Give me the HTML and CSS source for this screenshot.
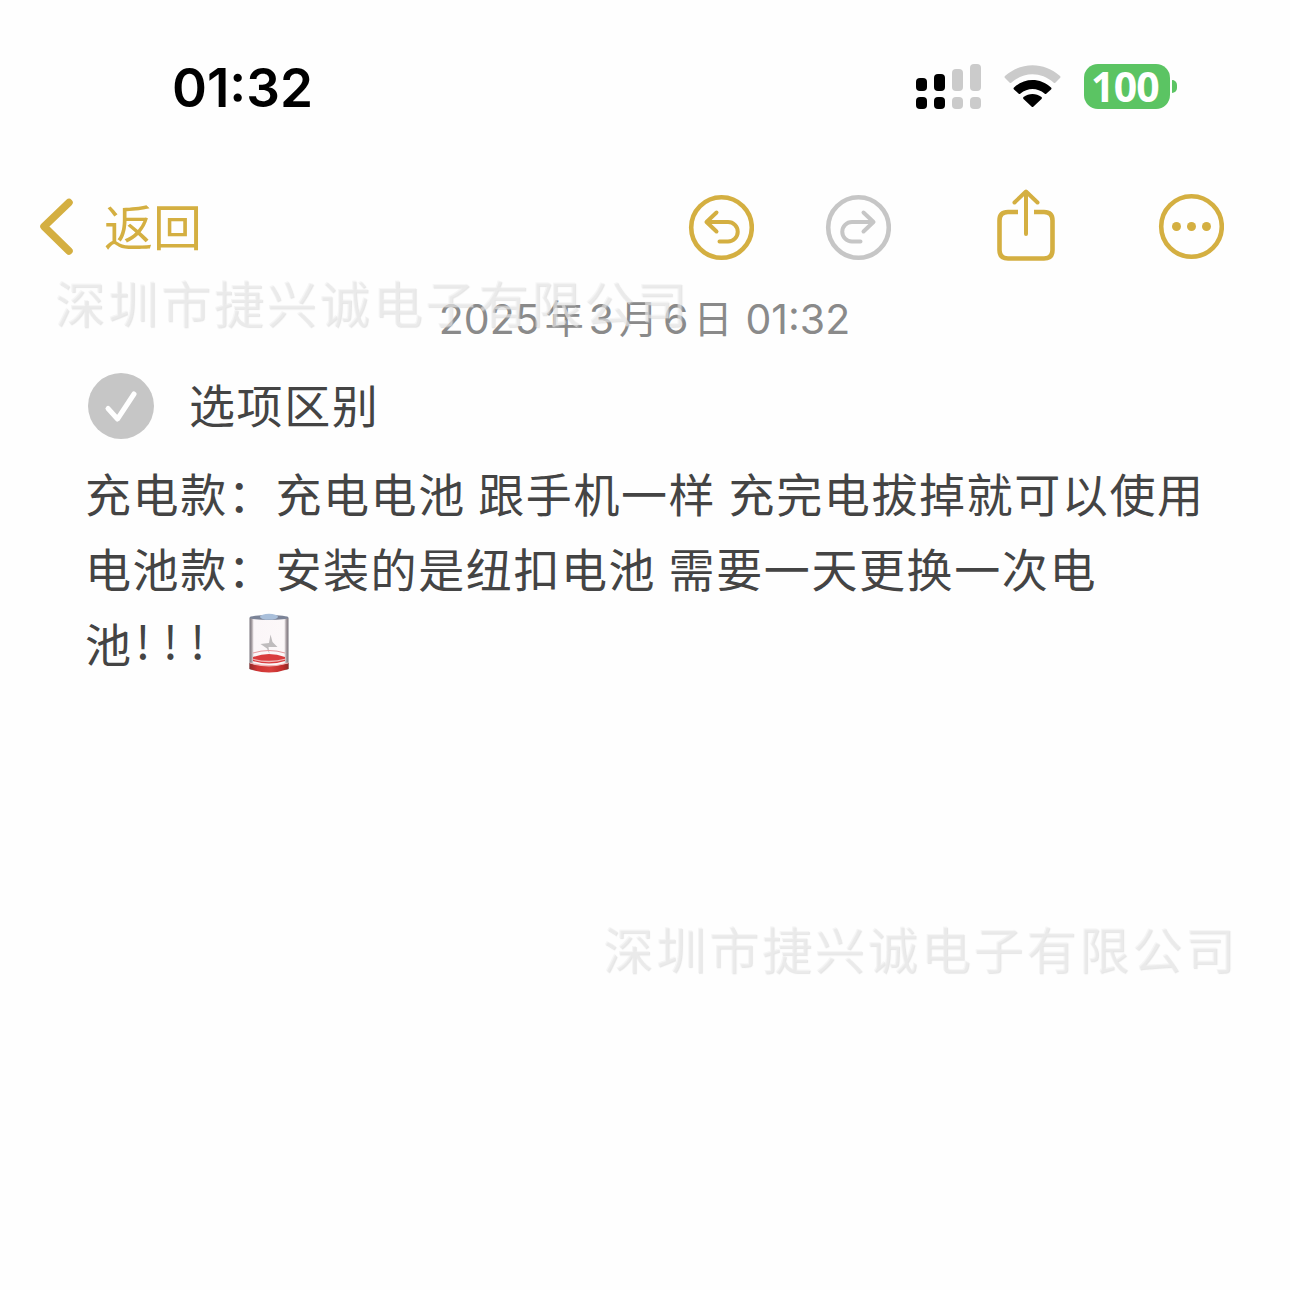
FILE: index.html
```html
<!DOCTYPE html>
<html lang="zh-CN">
<head>
    <meta charset="UTF-8">
    <meta name="viewport" content="width=device-width, initial-scale=1.0">
    <title>选项区别</title>
    <link rel="stylesheet" href="styles.css">
</head>
<body>
    <div class="status-bar">
        <div class="clock">01:32</div>
        <div class="status-icons">
            <svg class="signal" width="66" height="46" viewBox="0 0 66 46">
                <rect x="0" y="14" width="11" height="13" rx="4"/>
                <rect x="18" y="10" width="11" height="17" rx="4"/>
                <rect class="off" x="36" y="5" width="11" height="22" rx="4"/>
                <rect class="off" x="54" y="0" width="11" height="27" rx="4"/>
                <rect x="0" y="33" width="11" height="12" rx="4"/>
                <rect x="18" y="33" width="11" height="12" rx="4"/>
                <rect class="off" x="36" y="33" width="11" height="12" rx="4"/>
                <rect class="off" x="54" y="33" width="11" height="12" rx="4"/>
            </svg>
            <svg class="wifi" width="58" height="43" viewBox="0 0 58 43">
                <path class="off" d="M1 13 Q0 12 1 11 C17 -3.500 40 -3.500 56 11 Q57 12 56 13 L51.500 17.500 Q50.500 18.500 49.500 17.500 C37 6.500 20 6.500 7.500 17.500 Q6.500 18.500 5.500 17.500 Z"/>
                <path d="M10 24.500 Q9 23.500 10 22.500 C20.500 12.500 36.500 12.500 47 22.500 Q48 23.500 47 24.500 L42.500 28.500 Q41.500 29.500 40.500 28.500 C33.500 22.500 23.500 22.500 16.500 28.500 Q15.500 29.500 14.500 28.500 Z"/>
                <path d="M19.500 34 Q18.500 33 19.500 32 C25 28 32 28 37.500 32 Q38.500 33 37.500 34 L29.500 41.500 Q28.500 42.500 27.500 41.500 Z"/>
            </svg>
            <div class="battery">
                <span class="battery-level">100</span>
                <span class="battery-tip"></span>
            </div>
        </div>
    </div>

    <div class="toolbar">
        <div class="back">
            <svg width="36" height="60" viewBox="0 0 36 60">
                <path d="M31 5.500 L6 29.500 L31 54" stroke-width="7.500"/>
            </svg>
            <span>返回</span>
        </div>
        <div class="actions">
            <svg width="66" height="76" viewBox="0 0 66 76">
                <circle cx="33.500" cy="38.500" r="30.300" stroke-width="4.600"/>
                <path d="M28.500 23.500 L18.500 33 L28.500 42.500 M19 33 H40 A9.700 9.700 0 0 1 40 52.500 H31.500" stroke-width="4"/>
            </svg>
            <svg class="disabled" width="66" height="76" viewBox="0 0 66 76">
                <circle cx="33.500" cy="38.500" r="30.300" stroke-width="4.600"/>
                <path d="M38.500 23.500 L48.500 33 L38.500 42.500 M48 33 H27 A9.700 9.700 0 0 0 27 52.500 H35.500" stroke-width="4"/>
            </svg>
            <svg class="share" width="60" height="76" viewBox="0 0 60 76">
                <path d="M22 23 H12 Q3.500 23 3.500 31.500 V61 Q3.500 69.500 12 69.500 H48 Q56.500 69.500 56.500 61 V31.500 Q56.500 23 48 23 H38" stroke-width="4.600" stroke-linecap="butt"/>
                <path d="M30 45 V3 M18.500 13.500 L30 2.500 L41.500 13.500" stroke-width="4"/>
            </svg>
            <svg class="more" width="66" height="76" viewBox="0 0 66 76">
                <circle cx="33.500" cy="37.500" r="30.300" stroke-width="4.600"/>
                <g class="dots">
                    <circle cx="18.500" cy="37.500" r="4.500"/>
                    <circle cx="33.500" cy="37.500" r="4.500"/>
                    <circle cx="48.500" cy="37.500" r="4.500"/>
                </g>
            </svg>
        </div>
    </div>

    <div class="date"><span class="year">2025</span><b>年</b><span>3</span><b>月</b><span>6</span><b>日</b><span class="hour">01:32</span></div>

    <div class="note">
        <div class="check-item">
            <svg width="66" height="66" viewBox="0 0 66 66">
                <circle cx="33" cy="33" r="33"/>
                <path d="M20 35.500 L29.500 46 L46 21"/>
            </svg>
            <span>选项区别</span>
        </div>
        <p>充电款：充电电池 跟手机一样 充完电拔掉就可以使用</p>
        <p>电池款：安装的是纽扣电池 需要一天更换一次电</p>
        <p class="last">池<span class="marks">!!!</span>
            <svg class="low-battery" width="42" height="62" viewBox="0 0 42 62">
                <defs>
                    <linearGradient id="red" x1="0" x2="1" y1="0" y2="0">
                        <stop offset="0" stop-color="#8e2a28"/>
                        <stop offset="0.200" stop-color="#cf3433"/>
                        <stop offset="0.550" stop-color="#d83f3d"/>
                        <stop offset="0.850" stop-color="#c02c2b"/>
                        <stop offset="1" stop-color="#8e2a28"/>
                    </linearGradient>
                    <linearGradient id="glass" x1="0" x2="1" y1="0" y2="0">
                        <stop offset="0" stop-color="#77727a"/>
                        <stop offset="0.060" stop-color="#a9a1a5"/>
                        <stop offset="0.110" stop-color="#fbf6f8"/>
                        <stop offset="0.890" stop-color="#fcf8f9"/>
                        <stop offset="0.940" stop-color="#aaa1a5"/>
                        <stop offset="1" stop-color="#77727a"/>
                    </linearGradient>
                </defs>
                <path d="M1.500 5 Q21 1 40.500 5 V56 Q21 64 1.500 56 Z" fill="url(#glass)"/>
                <ellipse cx="21" cy="4.500" rx="19.500" ry="2.500" fill="#7b8397"/>
                <ellipse cx="21" cy="3.800" rx="9" ry="3" fill="#a9bfda"/>
                <path d="M22.500 21.500 L24.500 29 L29.500 34 L20.500 34 L21.500 41 L19 35.500 L12.500 31 L21 30 Z" fill="#bfbcbd"/>
                <path d="M5 40 Q21 35 37 40" fill="none" stroke="#e59a9e" stroke-width="1"/>
                <path d="M5 44 Q21 38 37 44 V48 Q21 53 5 48 Z" fill="#d93c3e"/>
                <path d="M1.500 50 Q21 56 40.500 50 V56 Q21 63 1.500 56 Z" fill="url(#red)"/>
                <path d="M4 46 Q21 51 38 46 M2 50 Q21 55.500 40 50" fill="none" stroke="#f0b5b5" stroke-width="1.300"/>
            </svg>
        </p>
    </div>

    <div class="watermark top">深圳市捷兴诚电子有限公司</div>
    <div class="watermark bottom">深圳市捷兴诚电子有限公司</div>
</body>
</html>
```
FILE: styles.css
```css
* {
    box-sizing: border-box;
}

body {
    position: relative;
    width: 1290px;
    height: 1290px;
    margin: 0;
    overflow: hidden;
    background-color: #fefefe;
    color: #444;
    font-family: Inter, 'Noto Sans CJK SC', sans-serif;
}

svg {
    display: block;
    flex: none;
}

.status-bar {
    display: flex;
    justify-content: space-between;
    height: 186px;
    padding: 64px 113px 0 172px;
}

.clock {
    height: 48px;
    line-height: 49px;
    font-size: 53px;
    font-weight: 600;
    color: #000;
}

.status-icons {
    display: flex;
    align-items: flex-start;
}

.status-icons .off {
    fill: #cbcbcb;
}

.wifi {
    margin: 1px 22px 0 22px;
}

.battery {
    display: flex;
    align-items: center;
}

.battery-level {
    width: 86px;
    height: 45px;
    padding-right: 4px;
    border-radius: 14px;
    background-color: #5bc463;
    color: #fff;
    font-family: 'Open Sans', sans-serif;
    font-size: 41px;
    font-weight: 700;
    line-height: 45px;
    letter-spacing: -0.8px;
    text-align: center;
}

.battery-tip {
    width: 5px;
    height: 13px;
    margin-left: 2px;
    border-radius: 0 5px 5px 0;
    background-color: #5bc463;
}

.toolbar {
    display: flex;
    justify-content: space-between;
    height: 100px;
    padding: 3px 66px 0 38px;
}

.toolbar svg {
    fill: none;
    stroke: #d4af41;
    stroke-linecap: round;
    stroke-linejoin: round;
}

.back {
    display: flex;
    align-items: center;
    height: 76px;
    gap: 30px;
    color: #d4af41;
    font-size: 49px;
    line-height: 76px;
}

.back span {
    padding-top: 4px;
}

.actions {
    display: flex;
}

.toolbar .disabled {
    margin-left: 71px;
    stroke: #c6c6c6;
}

.actions .share {
    margin-left: 105px;
}

.actions .more {
    margin-left: 102px;
}

.actions .dots {
    fill: #d4af41;
    stroke: none;
}

.date {
    display: flex;
    justify-content: center;
    height: 66px;
    padding-right: 1px;
    line-height: 66px;
    font-size: 41px;
    color: #8a8a8a;
}

.date b {
    margin: 0 5px;
    font-size: 39px;
    font-weight: 400;
}

.date .hour {
    margin-left: 8px;
}

.note {
    padding: 20px 0 0 85px;
    font-family: 'Noto Sans CJK SC', sans-serif;
    font-size: 46px;
    letter-spacing: 1.6px;
    word-spacing: 0.5px;
}

.check-item {
    display: flex;
    align-items: center;
    height: 68px;
    gap: 35px;
    margin: 0 0 15px 3px;
}

.check-item span {
    padding-bottom: 6px;
}

.check-item circle {
    fill: #c6c6c6;
}

.check-item path {
    fill: none;
    stroke: #fff;
    stroke-width: 5;
    stroke-linecap: round;
    stroke-linejoin: round;
}

.note p {
    height: 75px;
    margin: 0;
    line-height: 75px;
    white-space: nowrap;
}

.note .last {
    display: flex;
}

.marks {
    margin: -3px 0 0 3px;
    letter-spacing: 12.5px;
}

.low-battery {
    margin: 8px 0 0 30px;
}

/* company mark laid over the note */
.watermark {
    position: absolute;
    font-family: 'Noto Sans CJK SC', sans-serif;
    font-size: 50px;
    line-height: 60px;
    letter-spacing: 2.9px;
    white-space: nowrap;
    color: rgba(240, 240, 240, 0.5);
    text-shadow: 1px 1px 1px rgba(200, 200, 200, 0.45);
}

.watermark.top {
    left: 55px;
    top: 271px;
}

.watermark.bottom {
    left: 603px;
    top: 917px;
}
```
